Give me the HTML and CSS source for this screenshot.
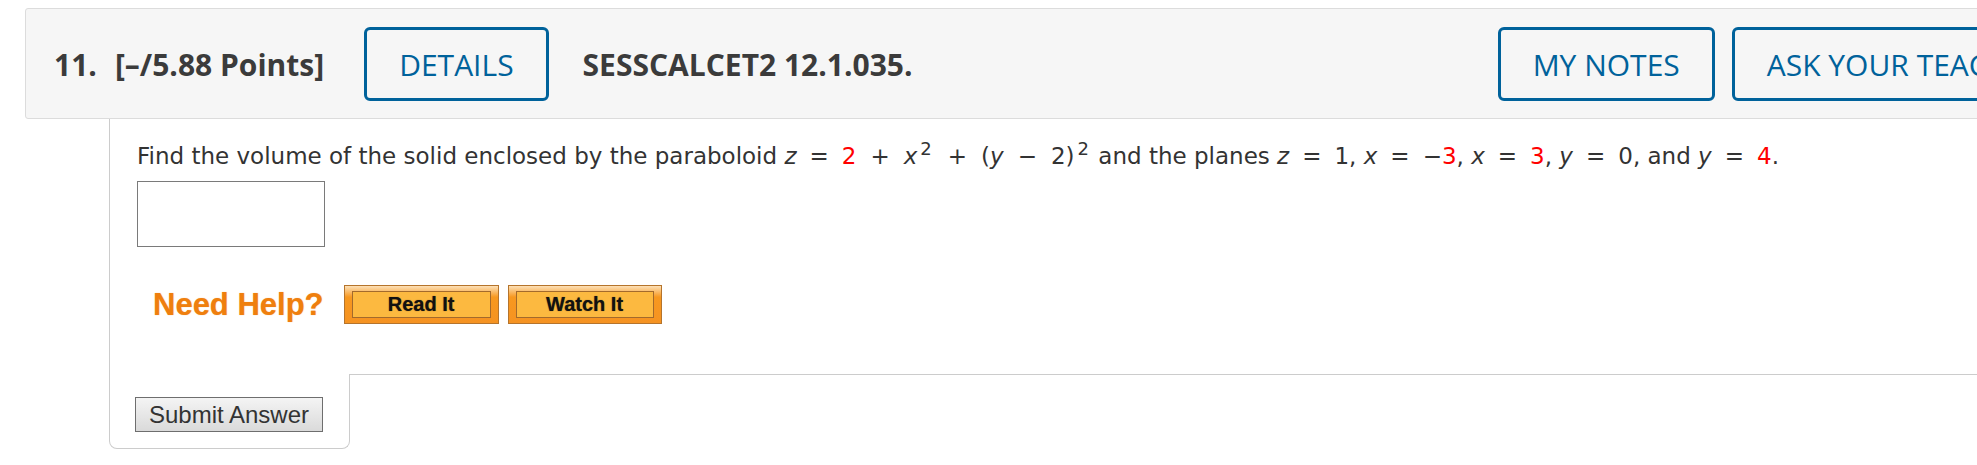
FILE: index.html
```html
<!DOCTYPE html>
<html lang="en">
<head>
  <meta charset="UTF-8" />
  <title>SESSCALCET2 12.1.035</title>
  <link rel="stylesheet" href="styles.css">
</head>
<body>

  <div class="page">
    <div class="question-header">
      <span class="q-number">11.</span>
      <span class="q-points">[&ndash;/5.88 Points]</span>
      <button class="header-btn details-btn">DETAILS</button>
      <span class="q-title">SESSCALCET2 12.1.035.</span>
      <div class="header-right">
        <button class="header-btn">MY NOTES</button>
        <button class="header-btn">ASK YOUR TEACHER</button>
      </div>
    </div>

    <div class="question-body">
      <p class="question-text">Find the volume of the solid enclosed by the paraboloid <i>z</i><span class="rel">=</span><span class="red">2</span><span class="bin">+</span><i>x</i><sup>2</sup><span class="bin">+</span>(<i>y</i><span class="bin">&minus;</span>2)<sup>2</sup> and the planes <i>z</i><span class="rel">=</span>1, <i>x</i><span class="rel">=</span>&minus;<span class="red">3</span>, <i>x</i><span class="rel">=</span><span class="red">3</span>, <i>y</i><span class="rel">=</span>0, and <i>y</i><span class="rel">=</span><span class="red">4</span>.</p>
      <input type="text" class="answer-input" />

      <div class="help-row">
        <span class="need-help">Need Help?</span>
        <button class="help-btn read-btn"><span>Read It</span></button>
        <button class="help-btn watch-btn"><span>Watch It</span></button>
      </div>
    </div>

    <div class="question-footer">
      <div class="submit-tab">
        <button class="submit-btn">Submit Answer</button>
      </div>
      <div class="footer-line"></div>
    </div>
  </div>

</body>
</html>
```

FILE: styles.css
```css
body {
  margin: 0;
  background: #fff;
  overflow: hidden;
}

.page {
  width: 2080px;
  padding: 8px 0 0 25px;
}

/* pasek z numerem zadania */
.question-header {
  display: flex;
  align-items: center;
  padding: 18px 0 17px 28px;
  background: #f6f6f6;
  border: 1px solid #dcdcdc;
  border-radius: 3px;
  font-family: "Open Sans", sans-serif;
  font-size: 30px;
  color: #3b3b3b;
}

.q-number {
  font-weight: bold;
  margin-right: 18px;
}

.q-points {
  font-weight: bold;
}

.header-btn {
  height: 74px;
  padding: 0 32px;
  background: transparent;
  border: 3px solid #00629b;
  border-radius: 6px;
  color: #00629b;
  font-family: "Open Sans", sans-serif;
  font-size: 30px;
  font-weight: 500;
}

.details-btn {
  margin: 0 34px 0 40px;
}

.q-title {
  font-weight: bold;
}

.header-right {
  display: flex;
  gap: 17px;
  margin-left: auto;
  padding-right: 24px;
}

/* tresc zadania */
.question-body {
  margin-left: 84px;
  padding: 22px 0 50px 27px;
  border-left: 1px solid #cccccc;
  font-family: "DejaVu Sans", Verdana, sans-serif;
  font-size: 23px;
  color: #333;
}

.question-text {
  margin: 0 0 9px;
  line-height: 31px;
}

.question-text sup {
  font-size: 18px;
  line-height: 0;
  vertical-align: 9px;
  margin: 0 2px 0 3px;
}

/* odstepy jak w zapisie matematycznym */
.rel {
  margin: 0 13px;
}

.bin {
  margin: 0 14px;
}

.red {
  color: #f00;
}

.answer-input {
  display: block;
  width: 188px;
  height: 66px;
  box-sizing: border-box;
  border: 1px solid #7a7a7a;
  margin: 0;
}

.help-row {
  display: flex;
  align-items: center;
  margin-top: 38px;
  padding-left: 16px;
}

.need-help {
  font-family: "Liberation Sans", Arial, sans-serif;
  font-weight: bold;
  font-size: 31px;
  color: #ef7f0e;
  text-shadow: 0 0 1px rgba(239, 127, 14, 0.6);
  margin-right: 20px;
}

.help-btn {
  padding: 5px 7px;
  border: 1px solid #b5742c;
  background: linear-gradient(#fde0b6, #f7981f 30%, #f59322);
  font-family: "Liberation Sans", Arial, sans-serif;
  font-weight: bold;
  font-size: 20px;
  color: #111;
}

.help-btn span {
  display: block;
  height: 27px;
  line-height: 25px;
  box-sizing: border-box;
  border: 1px solid #a36a2c;
  background: #fcb940;
  text-shadow: 0 0 1px rgba(0, 0, 0, 0.6);
}

.read-btn {
  width: 155px;
}

.watch-btn {
  width: 154px;
  margin-left: 9px;
}

/* zakladka z przyciskiem wyslania */
.question-footer {
  display: flex;
  margin-left: 84px;
}

.submit-tab {
  width: 241px;
  box-sizing: border-box;
  padding: 23px 0 16px 25px;
  border: 1px solid #cccccc;
  border-top: none;
  border-radius: 0 0 8px 8px;
}

.footer-line {
  flex: 1;
  border-top: 1px solid #cccccc;
}

.submit-btn {
  display: block;
  width: 188px;
  height: 35px;
  padding: 0;
  border: 1px solid #6e6e6e;
  background: linear-gradient(#f4f4f4, #dadada);
  font-family: "Liberation Sans", Arial, sans-serif;
  font-size: 24px;
  color: #333;
}
```
